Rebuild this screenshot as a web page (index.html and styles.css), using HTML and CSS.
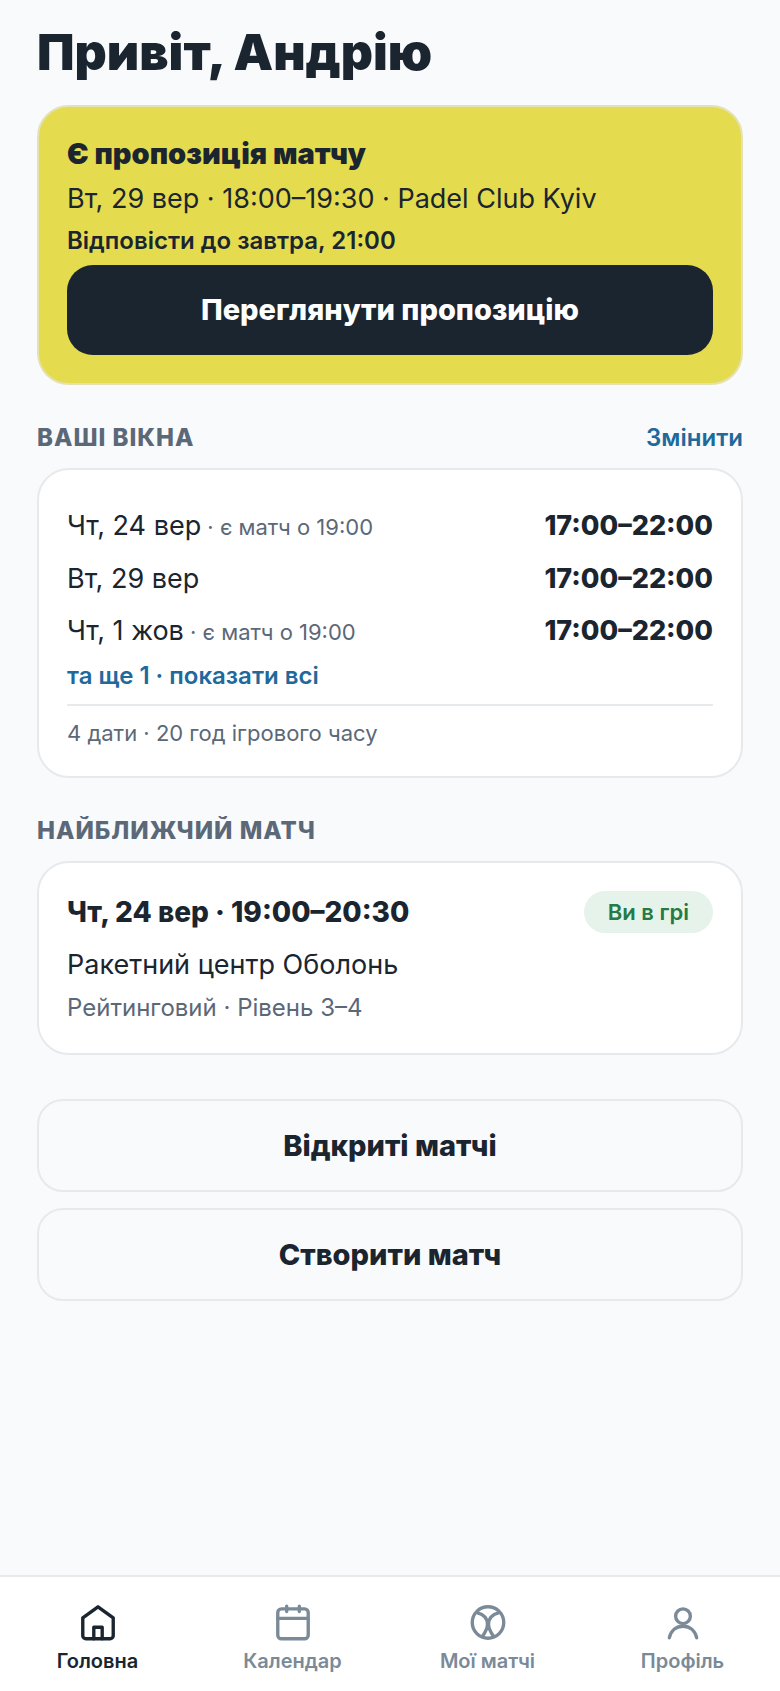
FILE: index.html
```html
<!DOCTYPE html>
<html lang="uk">
<head>
    <meta charset="UTF-8">
    <meta name="viewport" content="width=device-width, initial-scale=1.0">
    <title>Головна</title>
    <link rel="stylesheet" href="styles.css">
</head>
<body>
    <main class="page">
        <h1 class="greeting">Привіт, Андрію</h1>

        <section class="card card-offer">
            <h2 class="card-title">Є пропозиція матчу</h2>
            <p class="text">Вт, 29 вер · 18:00–19:30 · Padel Club Kyiv</p>
            <p class="deadline">Відповісти до завтра, 21:00</p>
            <button class="btn btn-dark" type="button">Переглянути пропозицію</button>
        </section>

        <div class="section-head">
            <h2 class="section-title">Ваші вікна</h2>
            <a class="link" href="#edit">Змінити</a>
        </div>
        <section class="card">
            <ul class="slots">
                <li class="slot">
                    <span>Чт, 24 вер<small class="note"> · є матч о 19:00</small></span>
                    <b class="time">17:00–22:00</b>
                </li>
                <li class="slot">
                    <span>Вт, 29 вер</span>
                    <b class="time">17:00–22:00</b>
                </li>
                <li class="slot">
                    <span>Чт, 1 жов<small class="note"> · є матч о 19:00</small></span>
                    <b class="time">17:00–22:00</b>
                </li>
            </ul>
            <a class="link" href="#all">та ще 1 · показати всі</a>
            <p class="summary">4 дати · 20 год ігрового часу</p>
        </section>

        <div class="section-head">
            <h2 class="section-title">Найближчий матч</h2>
        </div>
        <section class="card">
            <div class="match-head">
                <h3 class="match-title">Чт, 24 вер · 19:00–20:30</h3>
                <span class="badge">Ви в грі</span>
            </div>
            <p class="text">Ракетний центр Оболонь</p>
            <p class="level">Рейтинговий · Рівень 3–4</p>
        </section>

        <div class="actions">
            <button class="btn" type="button">Відкриті матчі</button>
            <button class="btn" type="button">Створити матч</button>
        </div>
    </main>

    <nav class="tabbar">
        <a class="tab active" href="#home">
            <svg class="icon" viewBox="0 0 40 40">
                <path d="M20 5.500 34.500 16V33a3 3 0 0 1-3 3h-23a3 3 0 0 1-3-3V16Z"/>
                <path d="M16 36V25h8v11"/>
            </svg>
            Головна
        </a>
        <a class="tab" href="#calendar">
            <svg class="icon" viewBox="0 0 40 40">
                <rect x="5.500" y="7.500" width="29" height="28.500" rx="3.500"/>
                <path d="M5.500 16.500h29M14 5v5M26 5v5"/>
            </svg>
            Календар
        </a>
        <a class="tab" href="#matches">
            <svg class="icon" viewBox="0 0 40 40">
                <circle cx="20" cy="20.500" r="15"/>
                <path d="M9.500 11C17 13 19.500 17.500 19.500 22c0 4-2 8-5 12M30.500 11C23 13 20.500 17.500 20.500 22c0 4 2 8 5 12"/>
            </svg>
            Мої матчі
        </a>
        <a class="tab" href="#profile">
            <svg class="icon" viewBox="0 0 40 40">
                <circle cx="20" cy="14.500" r="7"/>
                <path d="M7 35c1.500-7 6.500-11 13-11s11.500 4 13 11"/>
            </svg>
            Профіль
        </a>
    </nav>
</body>
</html>
```
FILE: styles.css
```css
* { box-sizing: border-box; }
body { margin: 0; min-height: 100vh; display: flex; flex-direction: column; background: #f8fafc; color: #1a2530; font-family: Inter, "Noto Sans", sans-serif; font-size: 27px; line-height: 44px; }
h1, h2, h3, p, ul { margin: 0; padding: 0; }
a { text-decoration: none; }

.page { flex: 1; padding: 22px 37px; }
.greeting { margin-bottom: 23px; font-size: 50px; line-height: 60px; font-weight: 900; }

.card { display: flex; flex-direction: column; gap: 4px; padding: 28px; background: #fff; border: 2px solid #e7eaed; border-radius: 32px; }
.card-offer { background: #e5db4e; border-color: #e4e2b4; }
.card-title { font-size: 29px; line-height: 38px; font-weight: 900; }
.deadline { font-size: 24px; line-height: 32px; font-weight: 600; }

.btn { width: 100%; height: 93px; font: 800 29px/38px Inter, "Noto Sans", sans-serif; color: #1a2530; background: transparent; border: 2px solid #e7eaed; border-radius: 26px; cursor: pointer; }
.btn-dark { height: 90px; margin-top: 4px; color: #fff; background: #1a2530; border: none; }

.section-head { display: flex; justify-content: space-between; align-items: center; margin: 37px 0 14px; line-height: 32px; }
.section-title { font-size: 24px; line-height: 32px; font-weight: 800; letter-spacing: 1px; text-transform: uppercase; color: #5b6878; }
.link { font-size: 24px; line-height: 32px; font-weight: 600; color: #21689b; }

.slots { padding-top: 2px; list-style: none; }
.slot { display: flex; justify-content: space-between; line-height: 52px; }
.note { font-size: 22px; color: #5b6878; }
.time { font-weight: 800; }
.summary { margin-top: 8px; padding-top: 12px; border-top: 2px solid #e7eaed; font-size: 22px; line-height: 30px; color: #5b6878; }
.slots + .link { margin-top: -2px; }

.match-head { display: flex; justify-content: space-between; align-items: center; }
.match-title { font-size: 28px; line-height: 38px; font-weight: 800; }
.badge { padding: 4px 24px; border-radius: 21px; background: #e6f3ea; color: #257a45; font-size: 22px; line-height: 34px; font-weight: 600; }
.match-head + .text { margin-top: 6px; }
.level { font-size: 24px; line-height: 34px; color: #5b6878; }

.actions { display: flex; flex-direction: column; gap: 16px; margin-top: 44px; }

.tabbar { display: flex; justify-content: space-around; padding: 24px 0 16px; background: #fff; border-top: 2px solid #e7eaed; }
.tab { flex: 1; display: flex; flex-direction: column; align-items: center; gap: 4px; font-size: 20px; line-height: 28px; font-weight: 600; color: #7b8a98; }
.tab.active { color: #1a2530; }
.icon { width: 42px; height: 42px; fill: none; stroke: currentColor; stroke-width: 3.2; stroke-linecap: round; stroke-linejoin: round; }
```
